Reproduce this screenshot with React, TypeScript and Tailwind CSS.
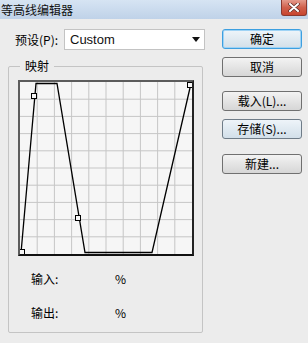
import React from 'react';

const cjk = "font-['Noto_Sans_CJK_SC',_'Noto_Sans',_sans-serif]";

const Chart = () => {
  const step = 172 / 10;
  const lines = Array.from({ length: 9 }, (_, i) => (i + 1) * step);
  const handles = [
    [2, 170],
    [14, 14],
    [58, 136],
    [170, 3],
  ];

  return (
    <div className="w-[176px] h-[176px] border-2 border-t-[#5c5c5c] border-l-[#5c5c5c] border-b-[#111] border-r-[#222] bg-[#f6f6f6]">
      <svg width="172" height="172" viewBox="0 0 172 172" className="block">
        {lines.map((p) => (
          <g key={p}>
            <line x1={p} y1={0} x2={p} y2={172} stroke="#c6c6c6" strokeWidth="1" />
            <line x1={0} y1={p} x2={172} y2={p} stroke="#c6c6c6" strokeWidth="1" />
          </g>
        ))}
        <polyline
          points="1,171 16,1.5 37,1.5 65,170.5 132,170.5 171,1.5"
          fill="none"
          stroke="#000"
          strokeWidth="1.3"
        />
        {handles.map(([x, y]) => (
          <rect
            key={`${x}-${y}`}
            x={x - 2.5}
            y={y - 2.5}
            width="5"
            height="5"
            fill="#f6f6f6"
            stroke="#000"
            strokeWidth="1"
          />
        ))}
      </svg>
    </div>
  );
};

const DialogButton = ({ label, primary = false, hover = false }: { label: string; primary?: boolean; hover?: boolean }) => (
  <button
    className={`w-[80px] h-[20px] rounded-[3px] border text-[12px] leading-none flex items-center justify-center text-black ${cjk} ${
      primary
        ? 'border-[#3d9fe0] shadow-[inset_0_0_0_1px_#9fd3f5] bg-gradient-to-b from-[#eef5fa] to-[#d3dfe8]'
        : hover
        ? 'border-[#6f7c88] bg-gradient-to-b from-[#eef4f9] to-[#d2dfe9]'
        : 'border-[#707070] bg-gradient-to-b from-[#f3f3f3] to-[#d6d6d6]'
    }`}
  >
    {label}
  </button>
);

export default function App() {
  return (
    <div className={`w-[308px] h-[343px] bg-[#ececec] overflow-hidden text-[12px] text-black ${cjk}`}>
      {/* Title bar */}
      <div className="h-[19px] flex justify-between bg-gradient-to-b from-[#d6e4f3] to-[#bfd2e8]">
        <span className="pl-[1px] pt-[2px] leading-[15px] text-[12px] text-[#111]">等高线编辑器</span>
        <div className="w-[26px] h-[16px] mr-[1px] rounded-b-[3px] border border-t-0 border-[#8a3a30] bg-gradient-to-b from-[#e49a8c] via-[#d0604c] to-[#c8452f] flex items-center justify-center">
          <svg width="12" height="9" viewBox="0 0 12 9">
            <path d="M2 1 L10 8 M10 1 L2 8" stroke="#5a2a24" strokeWidth="3.4" strokeLinecap="round" />
            <path d="M2 1 L10 8 M10 1 L2 8" stroke="#fff" strokeWidth="2" strokeLinecap="round" />
          </svg>
        </div>
      </div>

      <div className="flex">
        {/* Left column */}
        <div className="w-[214px]">
          <div className="mt-[10px] flex items-center h-[21px]">
            <span className="ml-[15px] w-[49px]">预设(P):</span>
            <div className="w-[141px] h-[21px] bg-white border border-[#c3c3c3] flex items-center justify-between pl-[5px] pr-[4px]">
              <span className="font-['Liberation_Sans',_sans-serif] text-[13px] text-[#111]">Custom</span>
              <svg width="8" height="5" viewBox="0 0 8 5">
                <path d="M0 0 H8 L4 5 Z" fill="#111" />
              </svg>
            </div>
          </div>

          {/* Group box */}
          <div className="relative ml-[8px] mt-[16px] w-[195px] h-[267px] border border-[#c4c4c4] rounded-[2px] pl-[9px] pt-[13px]">
            <span className="absolute -top-[9px] left-[11px] px-[5px] bg-[#ececec] leading-[16px]">映射</span>
            <Chart />
            <div className="mt-[15px] flex leading-[16px] pl-[13px]">
              <span className="w-[84px]">输入:</span>
              <span>%</span>
            </div>
            <div className="mt-[18px] flex leading-[16px] pl-[13px]">
              <span className="w-[84px]">输出:</span>
              <span>%</span>
            </div>
          </div>
        </div>

        {/* Right column */}
        <div className="ml-[8px] mt-[10px] flex flex-col">
          <DialogButton label="确定" primary />
          <div className="mt-[8px]">
            <DialogButton label="取消" />
          </div>
          <div className="mt-[14px]">
            <DialogButton label="载入(L)..." />
          </div>
          <div className="mt-[8px]">
            <DialogButton label="存储(S)..." hover />
          </div>
          <div className="mt-[15px]">
            <DialogButton label="新建..." />
          </div>
        </div>
      </div>
    </div>
  );
}
